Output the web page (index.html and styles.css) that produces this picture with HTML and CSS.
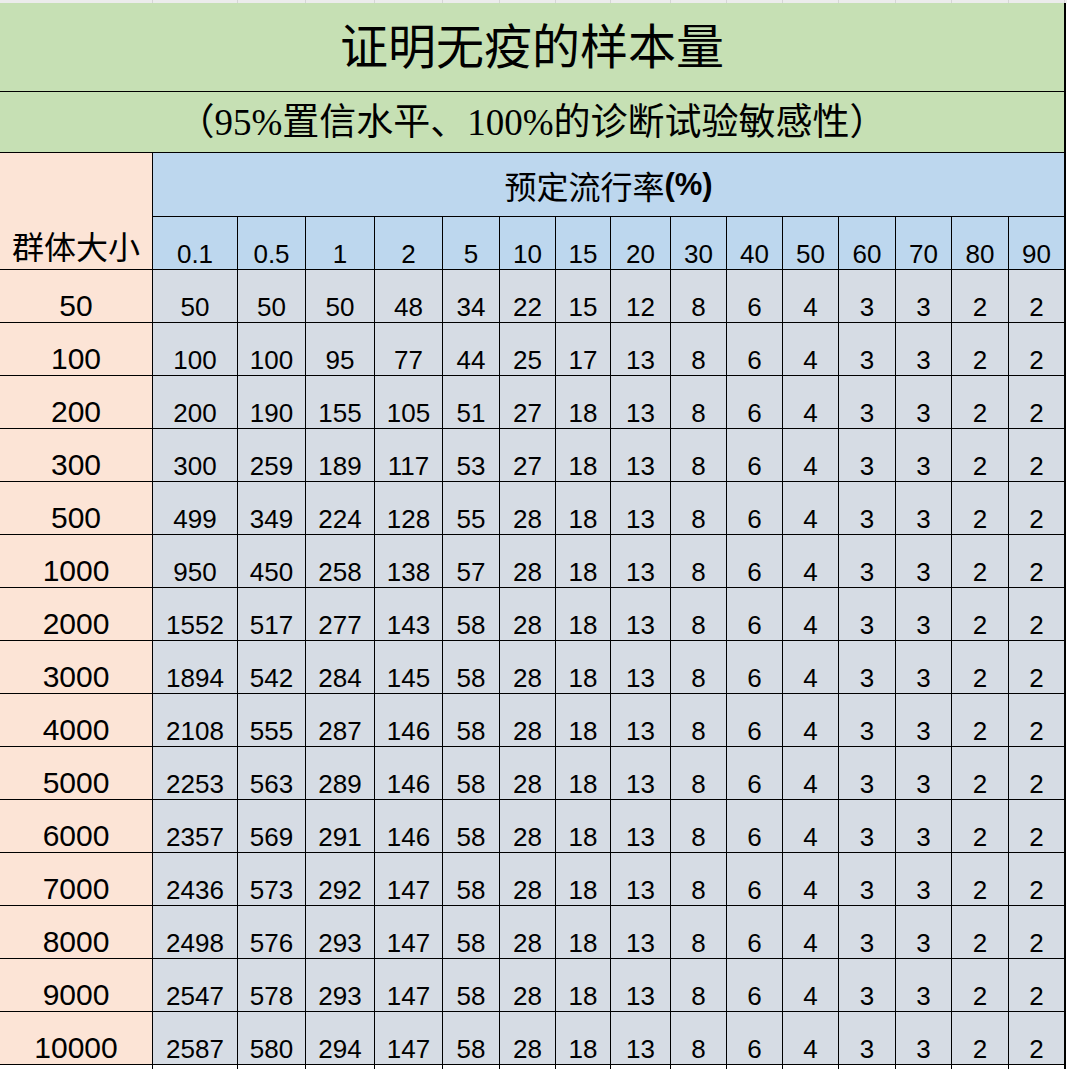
FILE: index.html
```html
<!DOCTYPE html>
<html lang="zh-CN">
<head>
<meta charset="utf-8">
<title>证明无疫的样本量</title>
<link rel="stylesheet" href="styles.css">
</head>
<body>
<div class="sheet">
  <div class="strip">
    <div></div><div></div><div></div><div></div><div></div><div></div><div></div><div></div><div></div><div></div><div></div><div></div><div></div><div></div><div></div><div></div><div></div>
  </div>
  <div class="grid">
    <div class="title">证明无疫的样本量</div>
    <div class="subtitle">（95%置信水平、100%的诊断试验敏感性）</div>
    <div class="group">群体大小</div>
    <div class="prev">预定流行率<span class="pct">(%)</span></div>

    <div class="ch">0.1</div><div class="ch">0.5</div><div class="ch">1</div><div class="ch">2</div><div class="ch">5</div><div class="ch">10</div><div class="ch">15</div><div class="ch">20</div><div class="ch">30</div><div class="ch">40</div><div class="ch">50</div><div class="ch">60</div><div class="ch">70</div><div class="ch">80</div><div class="ch">90</div>

    <div class="rh">50</div><div class="d">50</div><div class="d">50</div><div class="d">50</div><div class="d">48</div><div class="d">34</div><div class="d">22</div><div class="d">15</div><div class="d">12</div><div class="d">8</div><div class="d">6</div><div class="d">4</div><div class="d">3</div><div class="d">3</div><div class="d">2</div><div class="d">2</div>

    <div class="rh">100</div><div class="d">100</div><div class="d">100</div><div class="d">95</div><div class="d">77</div><div class="d">44</div><div class="d">25</div><div class="d">17</div><div class="d">13</div><div class="d">8</div><div class="d">6</div><div class="d">4</div><div class="d">3</div><div class="d">3</div><div class="d">2</div><div class="d">2</div>

    <div class="rh">200</div><div class="d">200</div><div class="d">190</div><div class="d">155</div><div class="d">105</div><div class="d">51</div><div class="d">27</div><div class="d">18</div><div class="d">13</div><div class="d">8</div><div class="d">6</div><div class="d">4</div><div class="d">3</div><div class="d">3</div><div class="d">2</div><div class="d">2</div>

    <div class="rh">300</div><div class="d">300</div><div class="d">259</div><div class="d">189</div><div class="d">117</div><div class="d">53</div><div class="d">27</div><div class="d">18</div><div class="d">13</div><div class="d">8</div><div class="d">6</div><div class="d">4</div><div class="d">3</div><div class="d">3</div><div class="d">2</div><div class="d">2</div>

    <div class="rh">500</div><div class="d">499</div><div class="d">349</div><div class="d">224</div><div class="d">128</div><div class="d">55</div><div class="d">28</div><div class="d">18</div><div class="d">13</div><div class="d">8</div><div class="d">6</div><div class="d">4</div><div class="d">3</div><div class="d">3</div><div class="d">2</div><div class="d">2</div>

    <div class="rh">1000</div><div class="d">950</div><div class="d">450</div><div class="d">258</div><div class="d">138</div><div class="d">57</div><div class="d">28</div><div class="d">18</div><div class="d">13</div><div class="d">8</div><div class="d">6</div><div class="d">4</div><div class="d">3</div><div class="d">3</div><div class="d">2</div><div class="d">2</div>

    <div class="rh">2000</div><div class="d">1552</div><div class="d">517</div><div class="d">277</div><div class="d">143</div><div class="d">58</div><div class="d">28</div><div class="d">18</div><div class="d">13</div><div class="d">8</div><div class="d">6</div><div class="d">4</div><div class="d">3</div><div class="d">3</div><div class="d">2</div><div class="d">2</div>

    <div class="rh">3000</div><div class="d">1894</div><div class="d">542</div><div class="d">284</div><div class="d">145</div><div class="d">58</div><div class="d">28</div><div class="d">18</div><div class="d">13</div><div class="d">8</div><div class="d">6</div><div class="d">4</div><div class="d">3</div><div class="d">3</div><div class="d">2</div><div class="d">2</div>

    <div class="rh">4000</div><div class="d">2108</div><div class="d">555</div><div class="d">287</div><div class="d">146</div><div class="d">58</div><div class="d">28</div><div class="d">18</div><div class="d">13</div><div class="d">8</div><div class="d">6</div><div class="d">4</div><div class="d">3</div><div class="d">3</div><div class="d">2</div><div class="d">2</div>

    <div class="rh">5000</div><div class="d">2253</div><div class="d">563</div><div class="d">289</div><div class="d">146</div><div class="d">58</div><div class="d">28</div><div class="d">18</div><div class="d">13</div><div class="d">8</div><div class="d">6</div><div class="d">4</div><div class="d">3</div><div class="d">3</div><div class="d">2</div><div class="d">2</div>

    <div class="rh">6000</div><div class="d">2357</div><div class="d">569</div><div class="d">291</div><div class="d">146</div><div class="d">58</div><div class="d">28</div><div class="d">18</div><div class="d">13</div><div class="d">8</div><div class="d">6</div><div class="d">4</div><div class="d">3</div><div class="d">3</div><div class="d">2</div><div class="d">2</div>

    <div class="rh">7000</div><div class="d">2436</div><div class="d">573</div><div class="d">292</div><div class="d">147</div><div class="d">58</div><div class="d">28</div><div class="d">18</div><div class="d">13</div><div class="d">8</div><div class="d">6</div><div class="d">4</div><div class="d">3</div><div class="d">3</div><div class="d">2</div><div class="d">2</div>

    <div class="rh">8000</div><div class="d">2498</div><div class="d">576</div><div class="d">293</div><div class="d">147</div><div class="d">58</div><div class="d">28</div><div class="d">18</div><div class="d">13</div><div class="d">8</div><div class="d">6</div><div class="d">4</div><div class="d">3</div><div class="d">3</div><div class="d">2</div><div class="d">2</div>

    <div class="rh">9000</div><div class="d">2547</div><div class="d">578</div><div class="d">293</div><div class="d">147</div><div class="d">58</div><div class="d">28</div><div class="d">18</div><div class="d">13</div><div class="d">8</div><div class="d">6</div><div class="d">4</div><div class="d">3</div><div class="d">3</div><div class="d">2</div><div class="d">2</div>

    <div class="rh">10000</div><div class="d">2587</div><div class="d">580</div><div class="d">294</div><div class="d">147</div><div class="d">58</div><div class="d">28</div><div class="d">18</div><div class="d">13</div><div class="d">8</div><div class="d">6</div><div class="d">4</div><div class="d">3</div><div class="d">3</div><div class="d">2</div><div class="d">2</div>

    <div class="blank"></div><div class="blank"></div><div class="blank"></div><div class="blank"></div><div class="blank"></div><div class="blank"></div><div class="blank"></div><div class="blank"></div><div class="blank"></div><div class="blank"></div><div class="blank"></div><div class="blank"></div><div class="blank"></div><div class="blank"></div><div class="blank"></div><div class="blank"></div>
  </div>
</div>
</body>
</html>
```

FILE: styles.css
```css
html, body {
  margin: 0;
  padding: 0;
  background: #ffffff;
}

.sheet {
  width: 1067px;
  overflow: hidden;
}

.strip {
  display: grid;
  grid-template-columns: 152px 84px 67px 68px 67px 56px 55px 54px 59px 55px 55px 55px 56px 55px 56px 55px 1fr;
  column-gap: 1px;
  height: 3px;
  background: #d6d6d6;
}

.strip div {
  background: #ececec;
}

.grid {
  display: grid;
  width: max-content;
  grid-template-columns: 152px 84px 67px 68px 67px 56px 55px 54px 59px 55px 55px 55px 56px 55px 56px 55px;
  grid-template-rows: 88px 60px 63px 52px repeat(15, 52px) 4px;
  gap: 1px;
  padding-right: 2px;
  background: #000000;
  color: #000000;
}

.title,
.subtitle {
  grid-column: 1 / -1;
  background: #c6e0b4;
  display: flex;
  align-items: center;
  justify-content: center;
  line-height: 1;
  font-family: "Liberation Serif", "Noto Sans CJK SC", serif;
}

.title {
  grid-row: 1;
  font-size: 48px;
  padding-top: 2px;
}

.subtitle {
  grid-row: 2;
  font-size: 37px;
}

.group {
  grid-column: 1;
  grid-row: 3 / 5;
  background: #fce4d6;
  display: flex;
  align-items: flex-end;
  justify-content: center;
  padding-bottom: 8px;
  font-family: "Noto Sans CJK SC", sans-serif;
  font-size: 32px;
  line-height: 1;
}

.prev {
  grid-column: 2 / -1;
  grid-row: 3;
  background: #bdd7ee;
  display: flex;
  align-items: center;
  justify-content: center;
  font-family: "Noto Sans CJK SC", sans-serif;
  font-size: 32px;
  line-height: 1;
}

.pct {
  font-family: "Liberation Sans", Arial, sans-serif;
  font-weight: bold;
  font-size: 31px;
}

.ch,
.rh,
.d {
  display: flex;
  align-items: flex-end;
  justify-content: center;
  font-family: "Liberation Sans", Arial, sans-serif;
  line-height: 1;
  white-space: nowrap;
}

.ch {
  background: #bdd7ee;
  font-size: 26px;
  padding-bottom: 2px;
}

.rh {
  background: #fce4d6;
  font-size: 30px;
  padding-bottom: 1px;
}

.d {
  background: #d6dce4;
  font-size: 26px;
  padding-bottom: 2px;
}

.blank {
  background: #ffffff;
}
```
